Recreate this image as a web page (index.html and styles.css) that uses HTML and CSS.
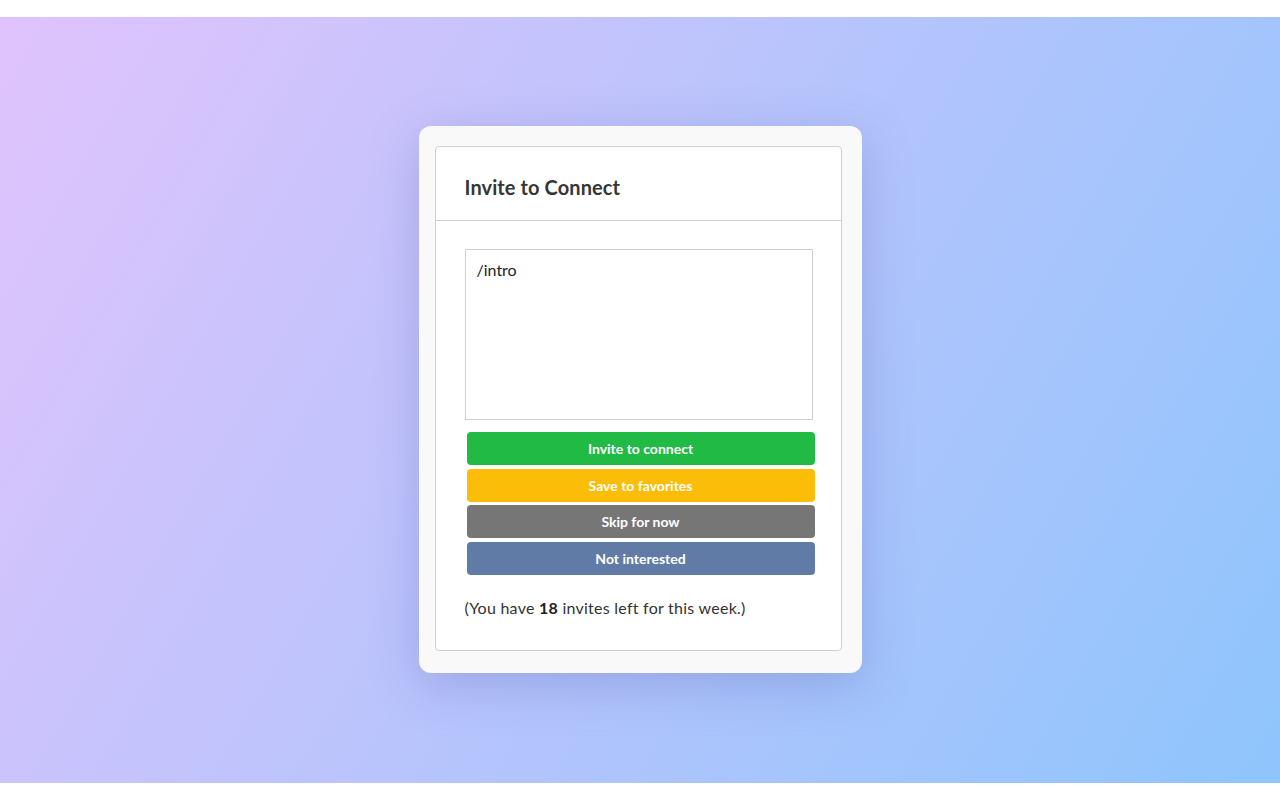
FILE: index.html
```html
<!DOCTYPE html>
<html lang="en">
<head>
<meta charset="utf-8">
<title>Invite to Connect</title>
<link rel="stylesheet" href="styles.css">
</head>
<body>
<div class="page">
  <div class="card">
    <div class="panel">
      <div class="panel-header">Invite to Connect</div>
      <div class="panel-body">
        <div class="message">/intro</div>
        <div class="actions">
          <button class="btn btn-green">Invite to connect</button>
          <button class="btn btn-yellow">Save to favorites</button>
          <button class="btn btn-grey">Skip for now</button>
          <button class="btn btn-blue">Not interested</button>
        </div>
        <p class="note">(You have <strong>18</strong> invites left for this week.)</p>
      </div>
    </div>
  </div>
</div>
</body>
</html>
```
FILE: styles.css
```css
html, body {
  margin: 0;
  padding: 0;
  background: #ffffff;
}
body {
  font-family: Lato, "Open Sans", "Liberation Sans", sans-serif;
  color: #333333;
}
.page {
  box-sizing: border-box;
  margin: 17px 0;
  height: 766px;
  padding-top: 109px;
  background: linear-gradient(120deg, #e0c3fc 0%, #8ec5fc 100%);
  display: flex;
  align-items: flex-start;
  justify-content: center;
}
.card {
  box-sizing: border-box;
  width: 443px;
  padding: 20px 20px 22px 16px;
  background: #f9f9f9;
  border-radius: 12px;
  box-shadow: 0 12px 50px rgba(90, 100, 180, 0.32);
}
.panel {
  background: #ffffff;
  border: 1px solid #d0d0d2;
  border-radius: 4px;
}
.panel-header {
  padding: 28px 29px 21px;
  font-size: 20px;
  line-height: 24px;
  font-weight: 700;
  color: #363636;
  letter-spacing: 0.1px;
  border-bottom: 1px solid #d0d0d2;
}
.panel-body {
  padding: 28px 28px 32px 29px;
}
.message {
  box-sizing: border-box;
  width: 348px;
  height: 171px;
  border: 1px solid #cfcfcf;
  padding: 11px 11px;
  font-size: 16px;
  line-height: 18px;
  color: #222222;
}
.actions {
  display: flex;
  flex-direction: column;
  gap: 3.5px;
  margin: 12px 0 0 2px;
  width: 348px;
}
.btn {
  height: 33px;
  border: none;
  border-radius: 4px;
  color: #ffffff;
  font-family: Lato, "Open Sans", "Liberation Sans", sans-serif;
  font-weight: 700;
  font-size: 14px;
  padding: 0;
  cursor: pointer;
}
.btn-green { background: #21ba45; }
.btn-yellow { background: #fbbd08; }
.btn-grey { background: #767676; }
.btn-blue { background: #607ca6; }
.note {
  margin: 23.5px 0 0;
  font-size: 16px;
  line-height: 20px;
  letter-spacing: 0.25px;
  color: #333333;
}
.note strong {
  font-weight: 700;
  color: #222222;
}
```
